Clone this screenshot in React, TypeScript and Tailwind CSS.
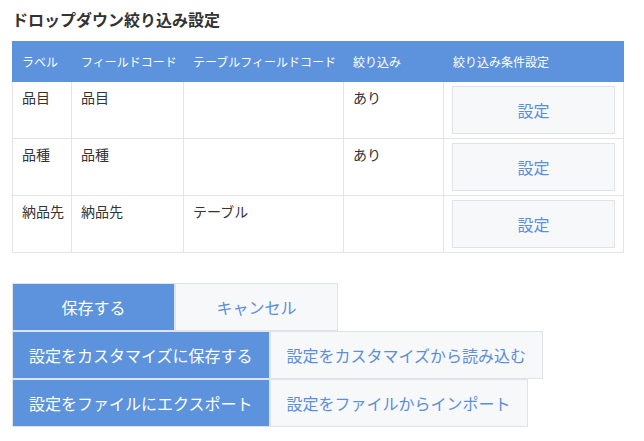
import React from 'react';

interface FilterRow {
	label: string;
	fieldCode: string;
	tableCode: string;
	filter: string;
}

const rows: FilterRow[] = [
	{ label: '品目', fieldCode: '品目', tableCode: '', filter: 'あり' },
	{ label: '品種', fieldCode: '品種', tableCode: '', filter: 'あり' },
	{ label: '納品先', fieldCode: '納品先', tableCode: 'テーブル', filter: '' }
];

const headers = ['ラベル', 'フィールドコード', 'テーブルフィールドコード', '絞り込み', '絞り込み条件設定'];

const gridCols = 'grid grid-cols-[59px_112px_160px_100px_180px]';

function ActionButton({ label, primary }: { label: string; primary?: boolean }) {
	return (
		<button
			className={`h-[48px] min-w-[163px] px-[16px] border border-[#e0e3e7] text-[16px] leading-none ${
				primary ? 'bg-[#5c93dc] text-white' : 'bg-[#f7f8fa] text-[#5b8fd9]'
			}`}
		>
			{label}
		</button>
	);
}

export default function App() {
	return (
		<div
			className="px-[12px] pt-[7px] bg-white text-[#333] min-h-screen"
			style={{ fontFamily: '"Noto Sans CJK JP", "Noto Sans", sans-serif' }}
		>
			<h1 className="text-[16px] leading-[24px] font-bold mb-[10px]">ドロップダウン絞り込み設定</h1>

			{/* Filter table */}
			<div className="w-[612px]">
				<div className={`${gridCols} h-[41px] bg-[#5c93dc] border-l border-[#5c93dc] text-white text-[12px]`}>
					{headers.map((h) => (
						<div key={h} className="flex items-center pl-[9px] whitespace-nowrap">
							{h}
						</div>
					))}
				</div>

				{rows.map((row) => (
					<div key={row.label} className={`${gridCols} border-l border-[#e4e4e4] text-[14px] leading-[20px]`}>
						<div className="border-r border-b border-[#e4e4e4] pl-[9px] pt-[5px] h-[57px]">{row.label}</div>
						<div className="border-r border-b border-[#e4e4e4] pl-[9px] pt-[5px]">{row.fieldCode}</div>
						<div className="border-r border-b border-[#e4e4e4] pl-[9px] pt-[5px]">{row.tableCode}</div>
						<div className="border-r border-b border-[#e4e4e4] pl-[9px] pt-[5px]">{row.filter}</div>
						<div className="border-r border-b border-[#e4e4e4] pl-[8px] pr-[8px] pt-[4px]">
							<button className="w-full h-[48px] border border-[#dfe2e6] bg-[#f7f8fa] text-[#5b8fd9] text-[16px]">
								設定
							</button>
						</div>
					</div>
				))}
			</div>

			{/* Action buttons */}
			<div className="mt-[30px] flex flex-col items-start">
				<div className="flex">
					<ActionButton label="保存する" primary />
					<ActionButton label="キャンセル" />
				</div>
				<div className="flex">
					<ActionButton label="設定をカスタマイズに保存する" primary />
					<ActionButton label="設定をカスタマイズから読み込む" />
				</div>
				<div className="flex">
					<ActionButton label="設定をファイルにエクスポート" primary />
					<ActionButton label="設定をファイルからインポート" />
				</div>
			</div>
		</div>
	);
}
